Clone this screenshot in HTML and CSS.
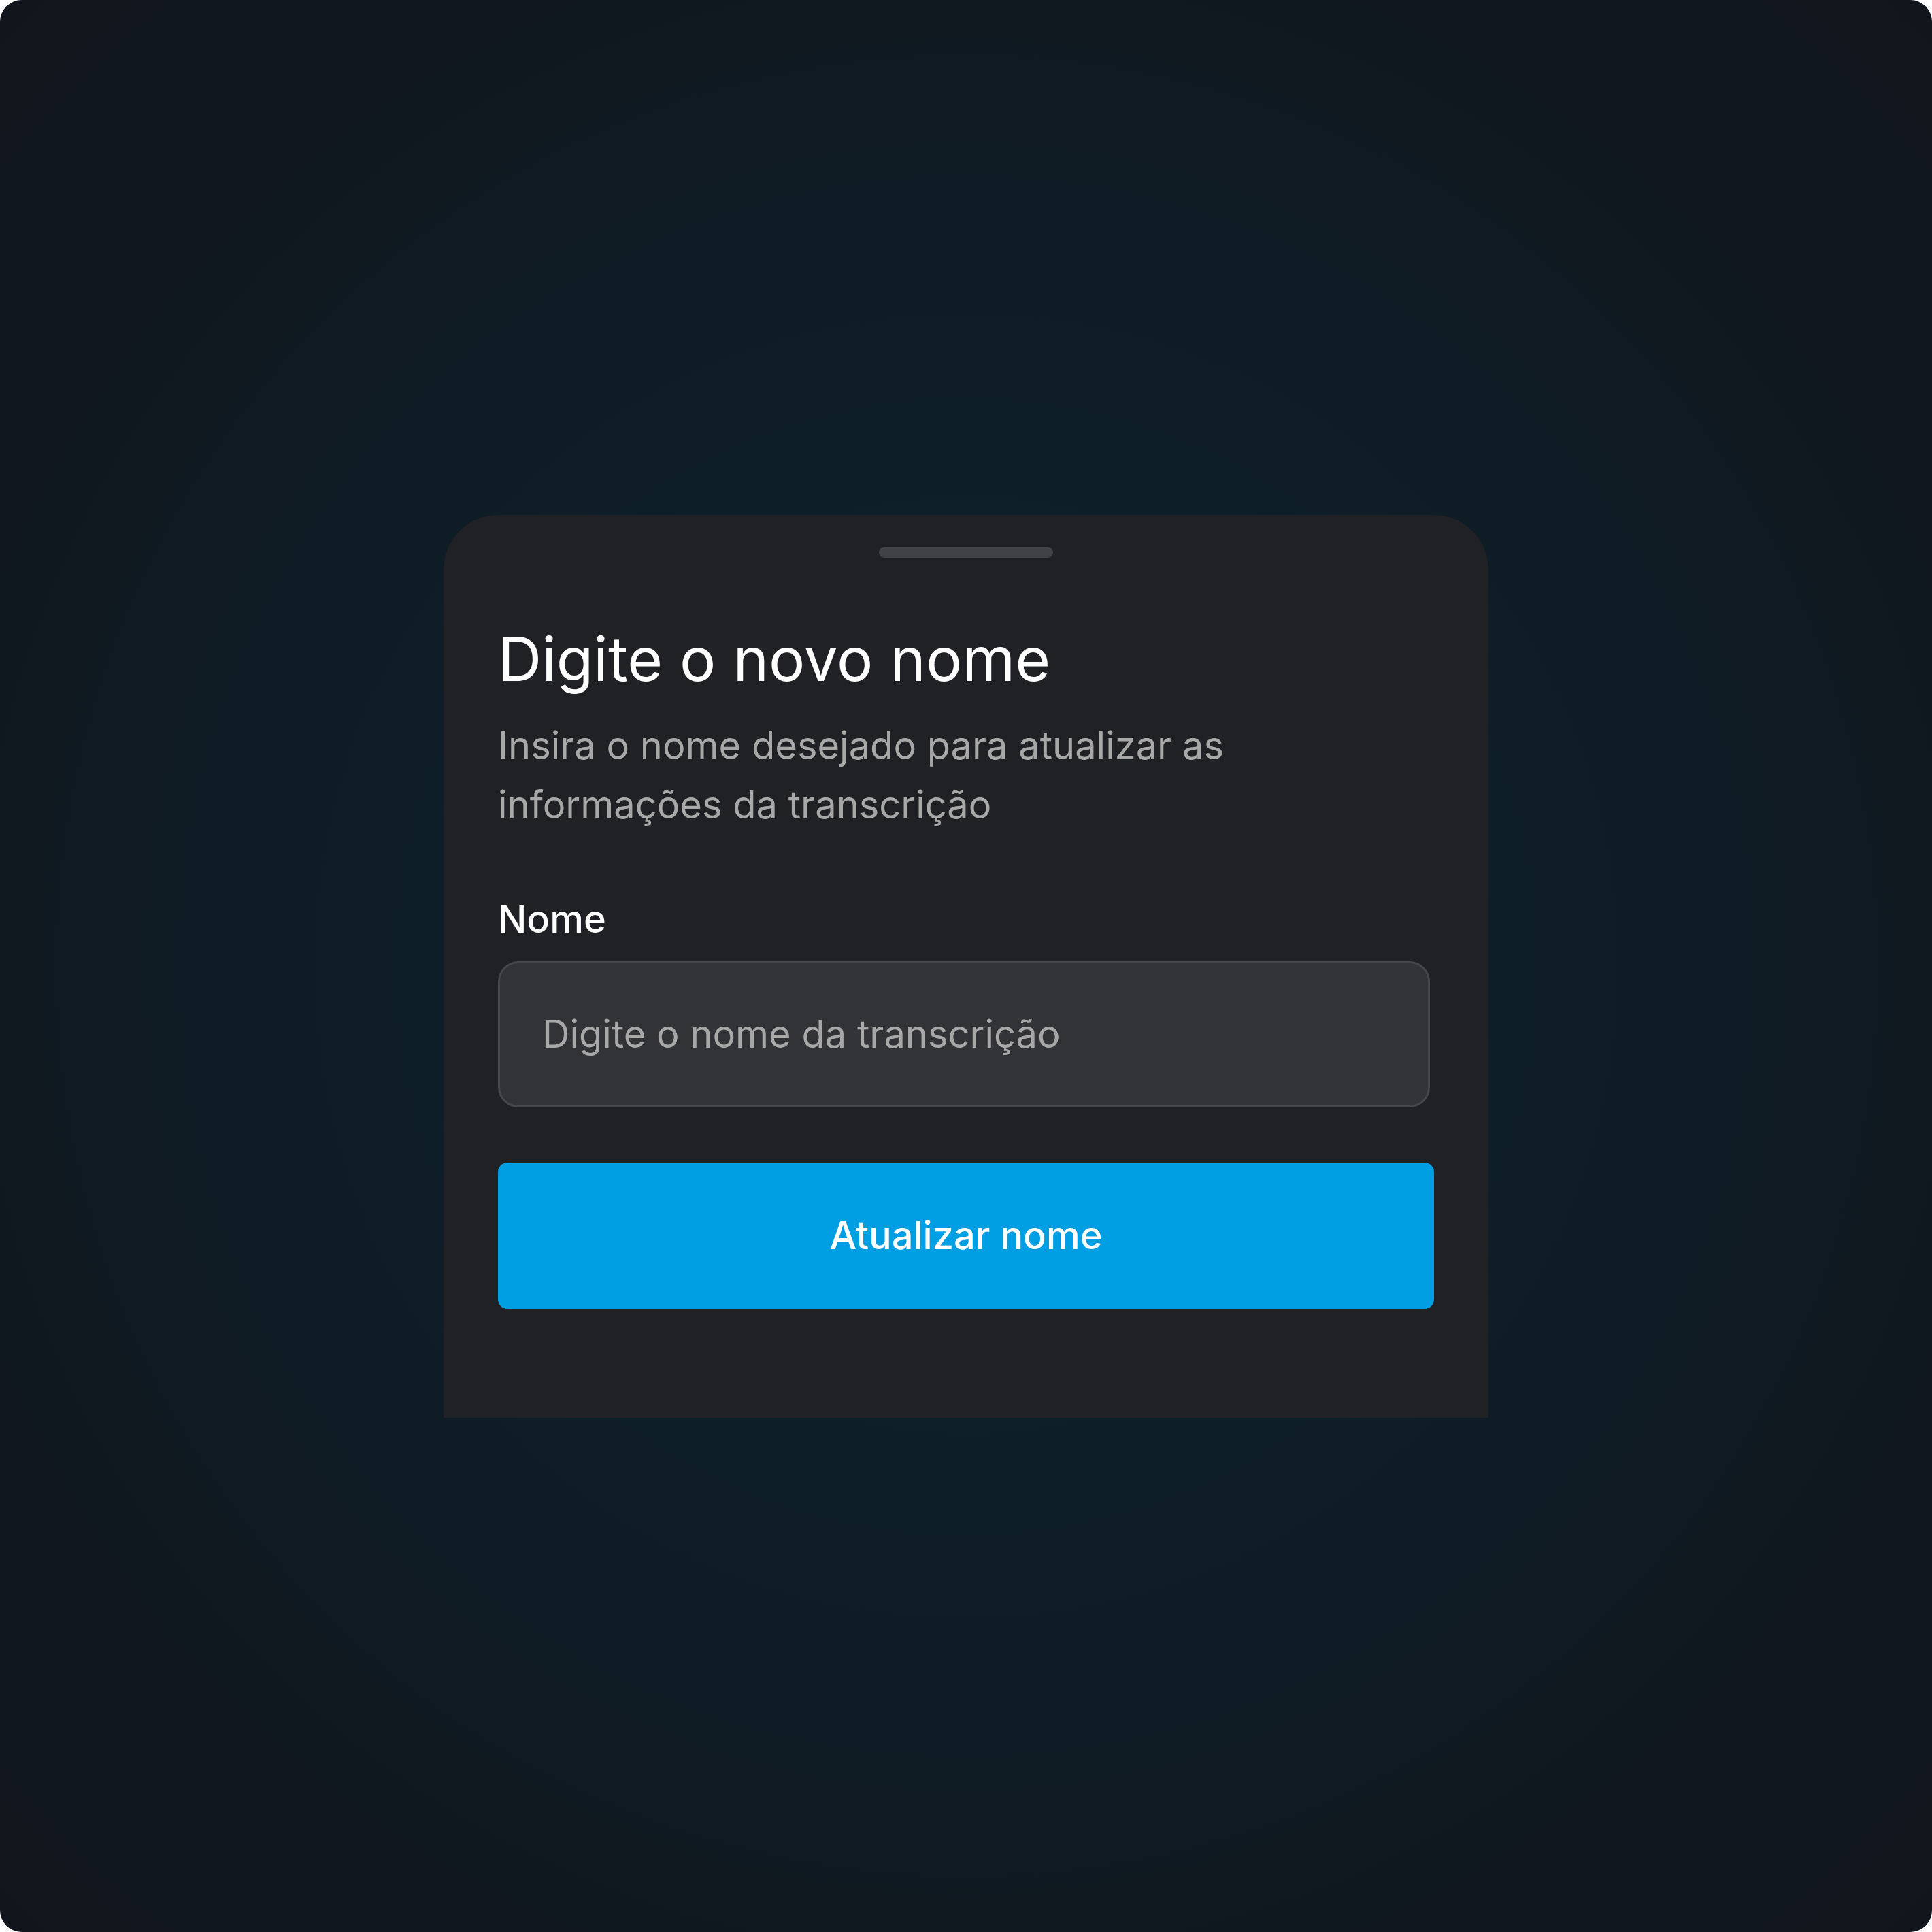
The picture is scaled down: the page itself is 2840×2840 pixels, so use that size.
FILE: index.html
```html
<!DOCTYPE html>
<html lang="pt-BR">
<head>
<meta charset="utf-8">
<title>Digite o novo nome</title>
<link rel="stylesheet" href="styles.css">
</head>
<body>
<div class="screen">
  <div class="sheet">
    <div class="handle"></div>
    <h1 class="title">Digite o novo nome</h1>
    <p class="subtitle">Insira o nome desejado para atualizar as informações da transcrição</p>
    <label class="label" for="nome">Nome</label>
    <input class="field" id="nome" type="text" placeholder="Digite o nome da transcrição">
    <button class="primary" type="button">Atualizar nome</button>
  </div>
</div>
</body>
</html>
```
FILE: styles.css
```css
html, body {
  margin: 0;
  padding: 0;
  background: #ffffff;
}
.screen {
  width: 2840px;
  height: 2840px;
  border-radius: 32px;
  overflow: hidden;
  background: radial-gradient(circle at 50% 50%, #0c212d 0%, #0e1e28 40%, #10181f 75%, #11161c 100%);
  display: flex;
  align-items: center;
  justify-content: center;
  font-family: Inter, "Noto Sans", sans-serif;
}
.sheet {
  width: 1536px;
  box-sizing: border-box;
  background: #202124;
  border-radius: 80px 80px 0 0;
  padding: 47px 80px 160px 80px;
  display: flex;
  flex-direction: column;
}
.handle {
  align-self: center;
  width: 256px;
  height: 16px;
  border-radius: 8px;
  background: #414246;
}
.title {
  margin: 95px 0 0 0;
  font-size: 89px;
  line-height: 108px;
  font-weight: 400;
  color: #ffffff;
}
.subtitle {
  margin: 30px 0 0 0;
  font-size: 56px;
  line-height: 87px;
  font-weight: 400;
  color: #a8a8a9;
  max-width: 1120px;
}
.label {
  margin-top: 92px;
  font-size: 56px;
  line-height: 65px;
  font-weight: 500;
  color: #ffffff;
}
.field {
  margin-top: 29px;
  width: calc(100% - 6px);
  height: 215px;
  box-sizing: border-box;
  border: 3px solid #46474c;
  border-radius: 30px;
  background: #323337;
  padding: 0 0 0 62px;
  font-family: Inter, "Noto Sans", sans-serif;
  font-size: 56px;
  color: #ffffff;
  outline: none;
}
.field::placeholder {
  color: #a8a8a9;
}
.primary {
  margin-top: 81px;
  width: 100%;
  height: 215px;
  border: none;
  border-radius: 14px;
  background: #009fe3;
  color: #ffffff;
  font-family: Inter, "Noto Sans", sans-serif;
  font-size: 56px;
  font-weight: 500;
  cursor: pointer;
}
```
